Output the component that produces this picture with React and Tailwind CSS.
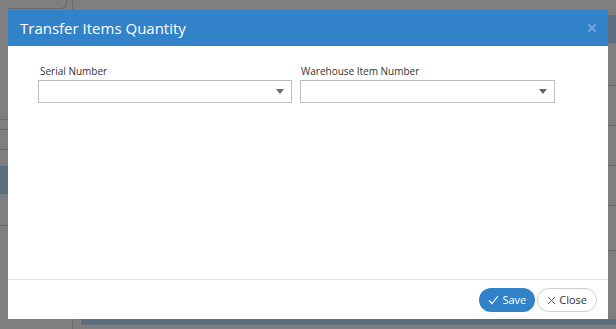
function Line() {
  return <div className="h-px bg-[#6b6b6b]" />;
}

function Select() {
  return (
    <div className="h-[23px] border border-[#bdbdbd] flex items-center justify-end pr-[7px]">
      <svg width="8" height="5" viewBox="0 0 8 5"><path d="M0 0h8L4 5z" fill="#666" /></svg>
    </div>
  );
}

export default function App() {
  return (
    <div
      className="w-[616px] h-[329px] overflow-hidden bg-[#7f7f7f] flex"
      style={{ fontFamily: '"Open Sans", "Noto Sans", sans-serif' }}
    >
      {/* left edge of the dimmed page */}
      <div className="w-[8px] flex flex-col">
        <div className="h-[119px]" />
        <Line />
        <div className="h-[9px]" />
        <Line />
        <div className="h-[19px]" />
        <Line />
        <div className="h-[16px]" />
        <div className="h-[28px] bg-[#5c6d7d]" />
        <div className="h-[31px]" />
        <Line />
      </div>

      {/* middle column: modal */}
      <div className="w-[600px] flex flex-col">
        <div className="h-[10px] flex">
          <div className="w-[59px] h-[9px] border-r border-b border-[#6b6b6b] rounded-br-[6px]" />
          <div className="ml-[5px] w-px bg-[#6b6b6b]" />
        </div>

        <div className="h-[309px] bg-white flex flex-col">
          <div className="h-[36px] bg-[#3182c8] flex items-center justify-between pl-[12px] pr-[12px]">
            <span className="text-[15px] text-white leading-none">Transfer Items Quantity</span>
            <svg width="8" height="8" viewBox="0 0 8 8" className="mb-[1px]">
              <path d="M1 1l6 6M7 1L1 7" stroke="#6ea8dc" strokeWidth="2.2" strokeLinecap="square" fill="none" />
            </svg>
          </div>

          <div className="flex-1 px-[30px] pt-[18px]">
            <div className="flex gap-[8px]">
              <div className="w-[254px]">
                <div className="text-[10px] font-medium text-[#333] leading-[14px] pl-[2px] mb-[2px]">Serial Number</div>
                <Select />
              </div>
              <div className="w-[255px]">
                <div className="text-[10px] font-medium text-[#333] leading-[14px] pl-[1px] mb-[2px]">Warehouse Item Number</div>
                <Select />
              </div>
            </div>
          </div>

          <div className="h-[40px] border-t border-[#e2e2e2] flex items-center justify-end gap-[2px] pr-[11px] pt-[1px]">
            <button className="h-[24px] px-[9px] rounded-full bg-[#3182c8] text-white text-[11px] flex items-center gap-[3px]">
              <svg width="11" height="10" viewBox="0 0 11 10"><path d="M1 5.5l3 3L10 1" stroke="#fff" strokeWidth="1.2" fill="none" /></svg>
              Save
            </button>
            <button className="h-[24px] px-[9px] rounded-full border border-[#cfcfcf] bg-white text-[#333] text-[11px] flex items-center gap-[3px]">
              <svg width="9" height="9" viewBox="0 0 9 9"><path d="M1 1l7 7M8 1L1 8" stroke="#555" strokeWidth="1" fill="none" /></svg>
              Close
            </button>
          </div>
        </div>

        <div className="h-[10px] flex">
          <div className="w-[64px]" />
          <div className="w-px bg-[#6b6b6b]" />
          <div className="w-[8px]" />
          <div className="flex-1 h-[6px] bg-[#5c6d7d]" />
        </div>
      </div>

      {/* right edge of the dimmed page */}
      <div className="w-[8px] flex flex-col">
        <div className="h-[15px]" />
        <div className="h-[28px] bg-[#5c6d7d]" />
        <div className="h-[42px]" />
        <Line />
        <div className="h-[39px]" />
        <Line />
        <div className="h-[39px]" />
        <Line />
        <div className="h-[39px]" />
        <Line />
        <div className="h-[44px]" />
        <Line />
        <div className="flex-1" />
        <div className="h-[10px]">
          <div className="h-[6px] bg-[#5c6d7d]" />
        </div>
      </div>
    </div>
  );
}
